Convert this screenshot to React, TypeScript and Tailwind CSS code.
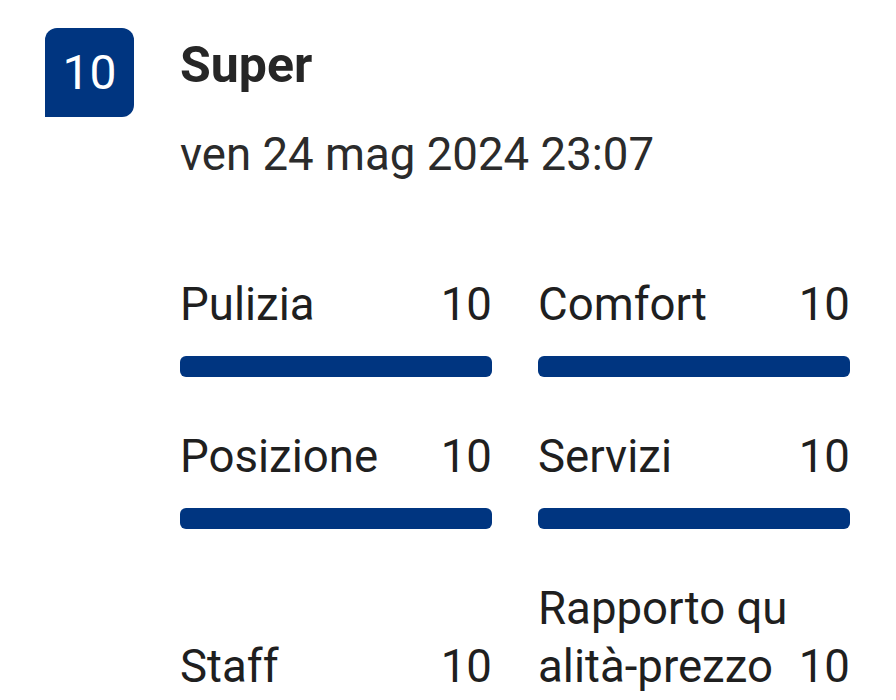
const scores = [
  { label: "Pulizia", value: 10 },
  { label: "Comfort", value: 10 },
  { label: "Posizione", value: 10 },
  { label: "Servizi", value: 10 },
  { label: "Staff", value: 10 },
  { label: "Rapporto qualità-prezzo", value: 10 },
];

function ScoreCell({ label, value }: { label: string; value: number }) {
  return (
    <div className="flex flex-col">
      <div className="flex flex-1 items-end justify-between gap-[10px] text-[45.6px] leading-[58px] text-[#1f1f1f]">
        <span className="min-w-0 flex-1 break-all">{label}</span>
        <span className="shrink-0">{value}</span>
      </div>
      <div className="mt-[22px] h-[21px] w-full rounded-[6px] bg-[#003580]" />
    </div>
  );
}

export default function App() {
  return (
    <div className="h-[700px] w-[896px] overflow-hidden bg-white font-['Roboto',sans-serif]">
      <div className="flex pl-[45px] pt-[28px]">
        <div className="flex h-[89px] w-[89px] shrink-0 items-center justify-center rounded-[12px] rounded-bl-none bg-[#003580] text-[48px] leading-none text-white">
          10
        </div>

        <div className="ml-[46px] flex-1 pr-[46px]">
          <h2 className="pt-[7px] text-[50px] font-bold leading-[60px] text-[#262626]">Super</h2>
          <p className="mt-[31px] text-[45.6px] leading-[58px] text-[#2b2b2b]">ven 24 mag 2024 23:07</p>

          <div className="mt-[92px] grid grid-cols-2 gap-x-[46px] gap-y-[51px]">
            {scores.map((score) => (
              <ScoreCell key={score.label} label={score.label} value={score.value} />
            ))}
          </div>
        </div>
      </div>
    </div>
  );
}
